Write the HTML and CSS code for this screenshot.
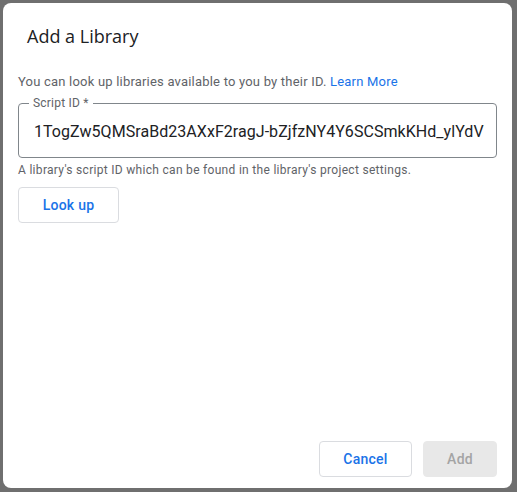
FILE: index.html
```html
<!DOCTYPE html>
<html>
<head>
<meta charset="utf-8">
<link rel="stylesheet" href="styles.css">
</head>
<body>
<div class="dialog">
  <h1 class="title">Add a Library</h1>
  <p class="desc">You can look up libraries available to you by their ID. <a class="link">Learn More</a></p>
  <div class="field">
    <span class="label">Script ID *</span>
    <div class="value">1TogZw5QMSraBd23AXxF2ragJ-bZjfzNY4Y6SCSmkKHd_ylYdV</div>
  </div>
  <p class="helper">A library's script ID which can be found in the library's project settings.</p>
  <button class="btn lookup">Look up</button>
  <div class="spacer"></div>
  <div class="actions">
    <button class="btn cancel">Cancel</button>
    <button class="btn add">Add</button>
  </div>
</div>
</body>
</html>
```

FILE: styles.css
```css
html, body {
  margin: 0;
  padding: 0;
  background: #6f6f6f;
  height: 100%;
}
body {
  padding: 3px 5px 4px 3px;
  box-sizing: border-box;
  font-family: Roboto, "Liberation Sans", sans-serif;
}
.dialog {
  background: #fff;
  border-radius: 8px;
  height: 485px;
  width: 509px;
  box-sizing: border-box;
  padding: 0 15px 11px 15px;
  display: flex;
  flex-direction: column;
}
.title {
  margin: 20px 0 0 9px;
  font-family: "Open Sans", Roboto, sans-serif;
  font-weight: 400;
  font-size: 18px;
  line-height: 26px;
  color: #202124;
}
.desc {
  margin: 25px 0 0 0;
  font-size: 13px;
  line-height: 16px;
  letter-spacing: 0.2px;
  color: #5f6368;
}
.link {
  color: #1a73e8;
}
.field {
  position: relative;
  margin-top: 13px;
  height: 55px;
  border: 1px solid #80868b;
  border-radius: 4px;
  box-sizing: border-box;
  display: flex;
  align-items: center;
  padding: 0 0 0 15px;
}
.label {
  position: absolute;
  top: -9px;
  left: 10px;
  padding: 0 4px;
  background: #fff;
  font-size: 12px;
  line-height: 16px;
  letter-spacing: 0.2px;
  color: #5f6368;
}
.value {
  font-size: 16px;
  color: #202124;
  white-space: nowrap;
  letter-spacing: 0.05px;
  margin-top: 1px;
}
.helper {
  margin: 4px 0 0 0;
  font-size: 12px;
  line-height: 16px;
  letter-spacing: 0.3px;
  color: #5f6368;
}
.btn {
  font-family: Roboto, "Liberation Sans", sans-serif;
  font-size: 14px;
  font-weight: 500;
  height: 36px;
  border-radius: 4px;
  background: #fff;
  border: 1px solid #dadce0;
  color: #1a73e8;
  padding: 0;
  letter-spacing: 0.25px;
}
.lookup {
  margin-top: 9px;
  width: 101px;
  align-self: flex-start;
}
.spacer {
  flex: 1;
}
.actions {
  display: flex;
  justify-content: flex-end;
  gap: 11px;
}
.cancel {
  width: 93px;
}
.add {
  width: 74px;
  background: #e8e8e8;
  border-color: #e8e8e8;
  color: #a4a4a4;
}
```
